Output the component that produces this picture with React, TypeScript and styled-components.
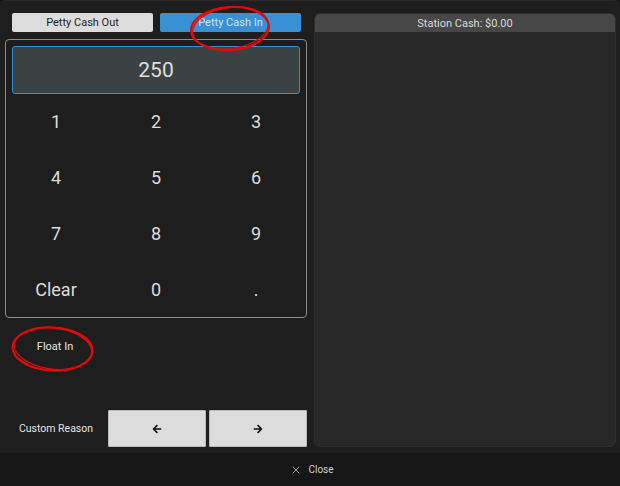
import React, { useState } from 'react'
import styled, { createGlobalStyle } from 'styled-components'
import { FaArrowLeft, FaArrowRight } from 'react-icons/fa'
import { X } from 'lucide-react'

const GlobalStyle = createGlobalStyle`
  html, body { margin: 0; padding: 0; background: #141414; }
  body { font-family: Roboto, "Liberation Sans", sans-serif; }
  * { box-sizing: border-box; }
`

const Page = styled.div`
  position: relative;
  width: 620px;
  height: 486px;
  background: #1e1e1e;
  border-top: 1px solid #2a2a2a;
  border-radius: 6px 6px 4px 4px;
  overflow: hidden;
  display: flex;
  flex-direction: column;
`

const Main = styled.div`
  flex: 1;
  display: flex;
  gap: 7px;
  padding: 12px 4px 6px 5px;
`

const LeftColumn = styled.div`
  width: 302px;
  display: flex;
  flex-direction: column;
`

const ToggleRow = styled.div`
  display: flex;
  gap: 7px;
  padding: 0 6px 0 7px;
  margin-bottom: 7px;
`

const ToggleButton = styled.button<{ $active?: boolean }>`
  flex: 1;
  height: 19px;
  border: none;
  border-radius: 2px;
  font-family: Roboto, "Liberation Sans", sans-serif;
  font-size: 11px;
  background: ${p => (p.$active ? '#3890d5' : '#dcdcdc')};
  color: ${p => (p.$active ? '#cfe3f4' : '#1e1e1e')};
  padding: 0;
`

const Keypad = styled.div`
  height: 279px;
  border: 1px solid #8c8c8c;
  border-radius: 4px;
  padding: 6px 6px 0 6px;
  display: flex;
  flex-direction: column;
`

const Display = styled.div`
  height: 48px;
  background: #3c4244;
  border: 1px solid #2b8fd9;
  border-radius: 3px;
  display: flex;
  align-items: center;
  justify-content: center;
  color: #dedede;
  font-size: 21px;
`

const KeyGrid = styled.div`
  flex: 1;
  display: grid;
  grid-template-columns: repeat(3, 1fr);
  grid-template-rows: repeat(4, 1fr);
  margin: 0 -6px;
`

const Key = styled.div`
  display: flex;
  align-items: center;
  justify-content: center;
  color: #dcdcdc;
  font-size: 18px;
`

const ReasonArea = styled.div`
  flex: 1;
  display: grid;
  grid-template-columns: 100px 98px 98px;
  align-content: start;
  padding-top: 7px;
`

const ReasonItem = styled.div`
  height: 42px;
  display: flex;
  align-items: center;
  justify-content: center;
  color: #e4e4e4;
  font-size: 11px;
`

const BottomRow = styled.div`
  display: grid;
  grid-template-columns: 100px 98px 98px;
  column-gap: 3px;
  height: 37px;
`

const Label = styled.div`
  display: flex;
  align-items: center;
  justify-content: center;
  color: #e4e4e4;
  font-size: 10.5px;
  padding-left: 2px;
`

const ArrowButton = styled.button`
  background: #dcdcdc;
  border: 1px solid #b8b8b8;
  border-radius: 1px;
  display: flex;
  align-items: center;
  justify-content: center;
  color: #111;
  padding: 0;
`

const StationPanel = styled.div`
  flex: 1;
  background: #282828;
  border-radius: 6px;
  border: 1px solid #2e2e2e;
  overflow: hidden;
  display: flex;
  flex-direction: column;
`

const StationHeader = styled.div`
  height: 18px;
  background: #474747;
  color: #dadada;
  font-size: 11px;
  display: flex;
  align-items: center;
  justify-content: center;
`

const Footer = styled.div`
  height: 33px;
  background: #171717;
  display: flex;
  align-items: center;
  justify-content: center;
  gap: 6px;
  color: #cfcfcf;
  font-size: 10px;
  padding-left: 4px;
`

const Annotations = styled.svg`
  position: absolute;
  left: 0;
  top: 0;
  pointer-events: none;
`

const keys = ['1', '2', '3', '4', '5', '6', '7', '8', '9', 'Clear', '0', '.']

export default function App() {
  const [mode, setMode] = useState<'out' | 'in'>('in')
  const [value] = useState('250')

  return (
    <>
      <GlobalStyle />
      <Page>
        <Main>
          <LeftColumn>
            <ToggleRow>
              <ToggleButton $active={mode === 'out'} onClick={() => setMode('out')}>Petty Cash Out</ToggleButton>
              <ToggleButton $active={mode === 'in'} onClick={() => setMode('in')}>Petty Cash In</ToggleButton>
            </ToggleRow>
            <Keypad>
              <Display>{value}</Display>
              <KeyGrid>
                {keys.map(k => <Key key={k}>{k}</Key>)}
              </KeyGrid>
            </Keypad>
            <ReasonArea>
              <ReasonItem>Float In</ReasonItem>
            </ReasonArea>
            <BottomRow>
              <Label>Custom Reason</Label>
              <ArrowButton><FaArrowLeft size={10} /></ArrowButton>
              <ArrowButton><FaArrowRight size={10} /></ArrowButton>
            </BottomRow>
          </LeftColumn>
          <StationPanel>
            <StationHeader>Station Cash: $0.00</StationHeader>
          </StationPanel>
        </Main>
        <Footer>
          <X size={12} strokeWidth={1.5} />
          <span>Close</span>
        </Footer>
        <Annotations width="620" height="486" viewBox="0 0 620 486">
          <g fill="none" stroke="#e20a0a">
            <ellipse cx="230" cy="27.5" rx="39" ry="21.5" strokeWidth="2.2" transform="rotate(-4 230 27.5)" />
            <ellipse cx="230.5" cy="27" rx="38" ry="20.5" strokeWidth="1.2" transform="rotate(-8 230 27.5)" />
            <ellipse cx="52.5" cy="348" rx="40" ry="21.5" strokeWidth="2.2" transform="rotate(3 52.5 348)" />
            <ellipse cx="53" cy="347.5" rx="39" ry="20.5" strokeWidth="1.2" transform="rotate(7 52.5 348)" />
          </g>
        </Annotations>
      </Page>
    </>
  )
}
